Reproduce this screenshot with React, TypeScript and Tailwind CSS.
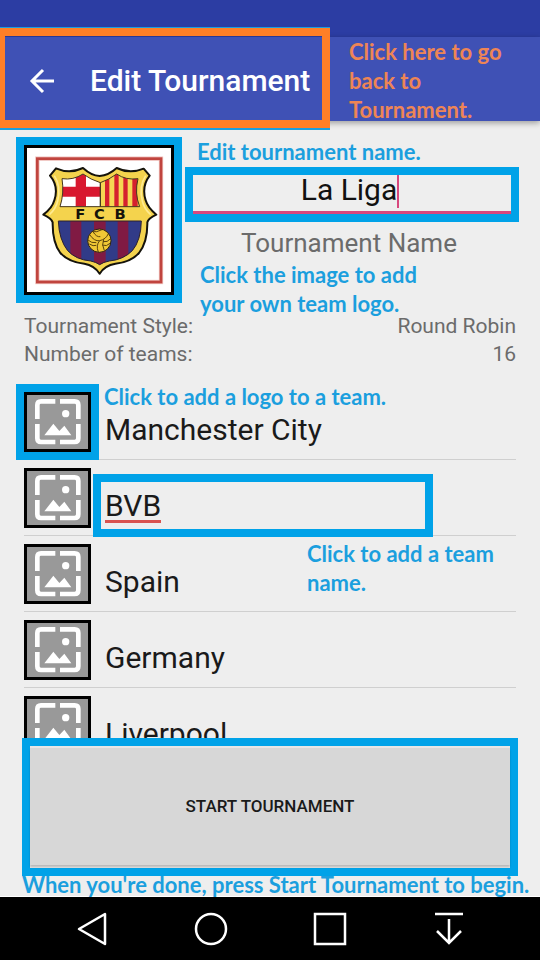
import type { ReactNode } from "react";

const NOTE = "pointer-events-none absolute z-20 font-[Lato,sans-serif] text-[22px] leading-[29px] font-bold";

function Note({ className, children }: { className: string; children: ReactNode }) {
  return <p className={`${NOTE} ${className}`}>{children}</p>;
}

function Crest() {
  return (
    <svg viewBox="81 69 432 432" className="block size-full" aria-hidden="true">
      <defs>
        <clipPath id="lower">
          <path d="M175 288H424Q423 346 397 377Q370 404 328 408Q310 411 299 419Q288 411 272 408Q228 404 203 377Q177 344 175 288Z" />
        </clipPath>
        <clipPath id="upperLeft">
          <path d="M186 161Q220 166 249 147Q272 164 301 173V245H180Q193 205 186 161Z" />
        </clipPath>
        <clipPath id="upperRight">
          <path d="M301 173Q327 164 350 147Q377 166 414 161Q403 205 419 245H301Z" />
        </clipPath>
      </defs>
      <rect x="81" y="69" width="432" height="432" fill="#fff" />
      <rect x="112" y="101" width="371" height="370" fill="none" stroke="#efc0bb" strokeWidth="13" />
      <rect x="112" y="101" width="371" height="370" fill="none" stroke="#c0443e" strokeWidth="8" />
      <path
        d="M150 152L168 130Q209 148 249 129Q274 152 299 153Q326 151 350 129Q389 148 431 131L449 152Q424 184 437 226Q443 248 469 269Q445 280 442 292Q443 351 417 384Q392 412 346 416Q314 421 299 446Q283 421 253 416Q207 412 181 384Q157 352 158 292Q154 280 130 269Q157 249 163 226Q177 184 150 152Z"
        fill="#f4d34d"
        stroke="#15130b"
        strokeWidth="6"
        strokeLinejoin="round"
      />
      <path
        d="M163 152Q184 184 173 228Q168 251 148 269M437 152Q416 184 427 228Q432 251 452 269"
        fill="none"
        stroke="#ffeb91"
        strokeWidth="5"
      />
      <g clipPath="url(#upperLeft)">
        <rect x="170" y="140" width="131" height="106" fill="#fff" />
        <path d="M227 140h31v106h-31zM170 185h131v30H170z" fill="#d8182f" />
      </g>
      <g clipPath="url(#upperRight)">
        <rect x="301" y="140" width="130" height="106" fill="#f5d653" />
        <path d="M315 140h13v106h-13zM343 140h13v106h-13zM370 140h13v106h-13zM397 140h16v106h-16z" fill="#d5202e" />
      </g>
      <path d="M186 161Q220 166 249 147Q272 164 301 173V245H180Q193 205 186 161ZM301 173Q327 164 350 147Q377 166 414 161Q403 205 419 245H301Z" fill="none" stroke="#44361d" strokeWidth="3" />
      <g clipPath="url(#lower)">
        <rect x="170" y="286" width="260" height="136" fill="#313b88" />
        <path d="M211 286h33v136h-33zM282 286h35v136h-35zM353 286h32v136h-32z" fill="#801a43" />
      </g>
      <path d="M175 288H424Q423 346 397 377Q370 404 328 408Q310 411 299 419Q288 411 272 408Q228 404 203 377Q177 344 175 288Z" fill="none" stroke="#2b2030" strokeWidth="3" />
      <g fill="#15130b" fontFamily="DejaVu Sans, sans-serif" fontWeight="700" fontSize="44" textAnchor="middle">
        <text x="241" y="283">F</text>
        <text x="298" y="283">C</text>
        <text x="360" y="283">B</text>
      </g>
      <circle cx="298" cy="347" r="35" fill="#f0c735" stroke="#2b2111" strokeWidth="3" />
      <g fill="none" stroke="#5a430d" strokeWidth="3">
        <path d="M269 329Q283 350 299 347Q318 343 325 326M279 320Q289 337 301 335M306 314Q288 323 279 320" />
        <path d="M299 347Q287 361 295 381M311 343Q304 359 313 377M268 357Q280 365 289 361" />
        <path d="M307 360Q320 366 330 355M309 350Q322 353 332 341M264 345Q274 355 289 353" />
      </g>
    </svg>
  );
}

function PlaceholderIcon() {
  return (
    <svg viewBox="81 60 183 162" className="block size-full" aria-hidden="true">
      <g fill="none" stroke="#fff" strokeWidth="14">
        <path d="M112 132V90Q112 79 123 79H166" />
        <path d="M180 79H224Q235 79 235 90V132" />
        <path d="M112 147V190Q112 201 123 201H166" />
        <path d="M180 201H224Q235 201 235 190V147" />
      </g>
      <circle cx="197" cy="116" r="11" fill="#fff" />
      <path d="M133 181L160 146L178 168L193 152L214 181Z" fill="#fff" />
    </svg>
  );
}

const teams = ["Manchester City", "BVB", "Spain", "Germany", "Liverpool"];

function TeamRow({ name, index }: { name: string; index: number }) {
  return (
    <li className="relative flex h-[76px] shrink-0 items-start gap-3.5 border-b border-[#cfcfcf] pt-2">
      <button
        type="button"
        aria-label={`Choose logo for ${name}`}
        className={`h-[60px] w-[67px] shrink-0 border-[3px] border-black bg-[#999] ${index === 0 ? "outline-8 outline-[#00a2e8]" : ""}`}
      >
        <PlaceholderIcon />
      </button>
      <input
        aria-label={`Team ${index + 1} name`}
        defaultValue={name}
        spellCheck={false}
        className="mt-5 h-9 min-w-0 flex-1 bg-transparent text-[30px] leading-9 text-[#1a1a1a] outline-none"
      />
      {index === 0 && <Note className="-top-0.5 left-20 text-[#1b9fde]">Click to add a logo to a team.</Note>}
      {index === 1 && (
        <>
          <span className="absolute top-[60px] left-[81px] h-[3px] w-14 bg-[#d9534f]" />
          <span className="pointer-events-none absolute top-3.5 left-[69px] z-10 h-[63px] w-[340px] border-8 border-[#00a2e8]" />
        </>
      )}
      {index === 2 && (
        <Note className="top-[3px] left-[283px] w-52 text-[#1b9fde]">
          Click to add a team
          <br />
          name.
        </Note>
      )}
    </li>
  );
}

export default function App() {
  return (
    <div className="flex h-screen flex-col overflow-hidden bg-[#eee] font-[Roboto,sans-serif]">
      <div className="h-[37px] shrink-0 bg-[#2c3da3]" />
      <header className="relative z-10 flex h-[84px] shrink-0 items-center bg-[#3f51b5] pt-[3px] pl-6 shadow-[0_2px_6px_rgba(0,0,0,0.35)]">
        <button type="button" aria-label="Back" className="flex size-9 items-center justify-center">
          <svg viewBox="0 0 36 36" className="size-9" fill="none" stroke="#fff" strokeWidth="3" aria-hidden="true">
            <path d="M30 18H8M19 7L8 18L19 29" />
          </svg>
        </button>
        <h1 className="ml-[30px] text-[30px] leading-9 font-medium text-white">Edit Tournament</h1>
        <div className="pointer-events-none absolute -top-2.5 -left-[3px] h-[103px] w-[333px] border-t border-b-2 border-[#1b9fde]">
          <div className="size-full border-8 border-[#ff7f27]" />
        </div>
        <Note className="top-0 left-[349px] text-[#ee8555]">
          Click here to go
          <br />
          back to
          <br />
          Tournament.
        </Note>
      </header>

      <main className="flex min-h-0 flex-1 flex-col">
        <section className="relative flex gap-[11px] px-6 pt-6 pr-[21px]">
          <button type="button" aria-label="Choose tournament logo" className="size-[150px] shrink-0 border-[3px] border-black outline-8 outline-[#00a2e8]">
            <Crest />
          </button>
          <div className="relative min-w-0 flex-1 pt-[22px]">
            <Note className="-top-2 left-3 whitespace-nowrap text-[#1b9fde]">Edit tournament name.</Note>
            <div className="relative h-[55px] border-8 border-[#00a2e8]">
              <input
                id="tournament-name"
                defaultValue="La Liga"
                spellCheck={false}
                className="h-[39px] w-full border-b-[3px] border-[#d8487e] bg-transparent pr-1.5 pb-2 text-center text-[30px] leading-8 text-[#111] outline-none"
              />
              <span className="absolute top-0 left-1/2 ml-[45px] h-[33px] w-0.5 bg-[#d8487e]" />
            </div>
            <label htmlFor="tournament-name" className="block h-[38px] pt-[3px] pr-1.5 text-center text-[26px] leading-9 text-[#6b6b6b]">
              Tournament Name
            </label>
            <Note className="top-[115px] left-[15px] whitespace-nowrap text-[#1b9fde]">
              Click the image to add
              <br />
              your own team logo.
            </Note>
          </div>
        </section>

        <dl className="mt-[17px] grid grid-cols-[1fr_auto] px-6 text-[21px] leading-7 text-[#6b6b6b]">
          <dt>Tournament Style:</dt>
          <dd className="text-right">Round Robin</dd>
          <dt>Number of teams:</dt>
          <dd className="text-right">16</dd>
        </dl>

        <ul className="mt-4 flex min-h-0 flex-1 flex-col overflow-hidden px-6">
          {teams.map((name, index) => (
            <TeamRow key={name} name={name} index={index} />
          ))}
        </ul>

        <div className="relative h-[159px] shrink-0 border-b border-white pr-[22px] pl-[22px]">
          <div className="h-[138px] border-8 border-[#00a2e8] bg-[#e6e6e6] pt-0.5 pb-[3px]">
            <button type="button" className="size-full bg-[#d7d7d7] text-[17px] font-medium text-[#1a1a1a] shadow-[0_2px_2px_rgba(0,0,0,0.2)]">
              START TOURNAMENT
            </button>
          </div>
          <Note className="-bottom-[3px] left-[22px] whitespace-nowrap text-[#1b9fde]">When you're done, press Start Tournament to begin.</Note>
        </div>
      </main>

      <nav className="grid h-[63px] shrink-0 grid-cols-4 bg-black px-8">
        <button type="button" aria-label="Back" className="flex items-center justify-center">
          <svg viewBox="0 0 36 36" className="size-9" fill="none" stroke="#fff" strokeWidth="2.5" aria-hidden="true">
            <path d="M5 18L31 3V33Z" strokeLinejoin="round" />
          </svg>
        </button>
        <button type="button" aria-label="Home" className="flex items-center justify-center">
          <svg viewBox="0 0 36 36" className="size-9" fill="none" stroke="#fff" strokeWidth="2.5" aria-hidden="true">
            <circle cx="18" cy="18" r="15" />
          </svg>
        </button>
        <button type="button" aria-label="Recent apps" className="flex items-center justify-center">
          <svg viewBox="0 0 36 36" className="size-9" fill="none" stroke="#fff" strokeWidth="2.5" aria-hidden="true">
            <path d="M3 3H33V33H3Z" />
          </svg>
        </button>
        <button type="button" aria-label="Hide navigation bar" className="flex items-center justify-center">
          <svg viewBox="0 0 36 36" className="size-9" fill="none" stroke="#fff" strokeWidth="2.5" aria-hidden="true">
            <path d="M4 3H32M18 8V32M6 20L18 32L30 20" />
          </svg>
        </button>
      </nav>
    </div>
  );
}
